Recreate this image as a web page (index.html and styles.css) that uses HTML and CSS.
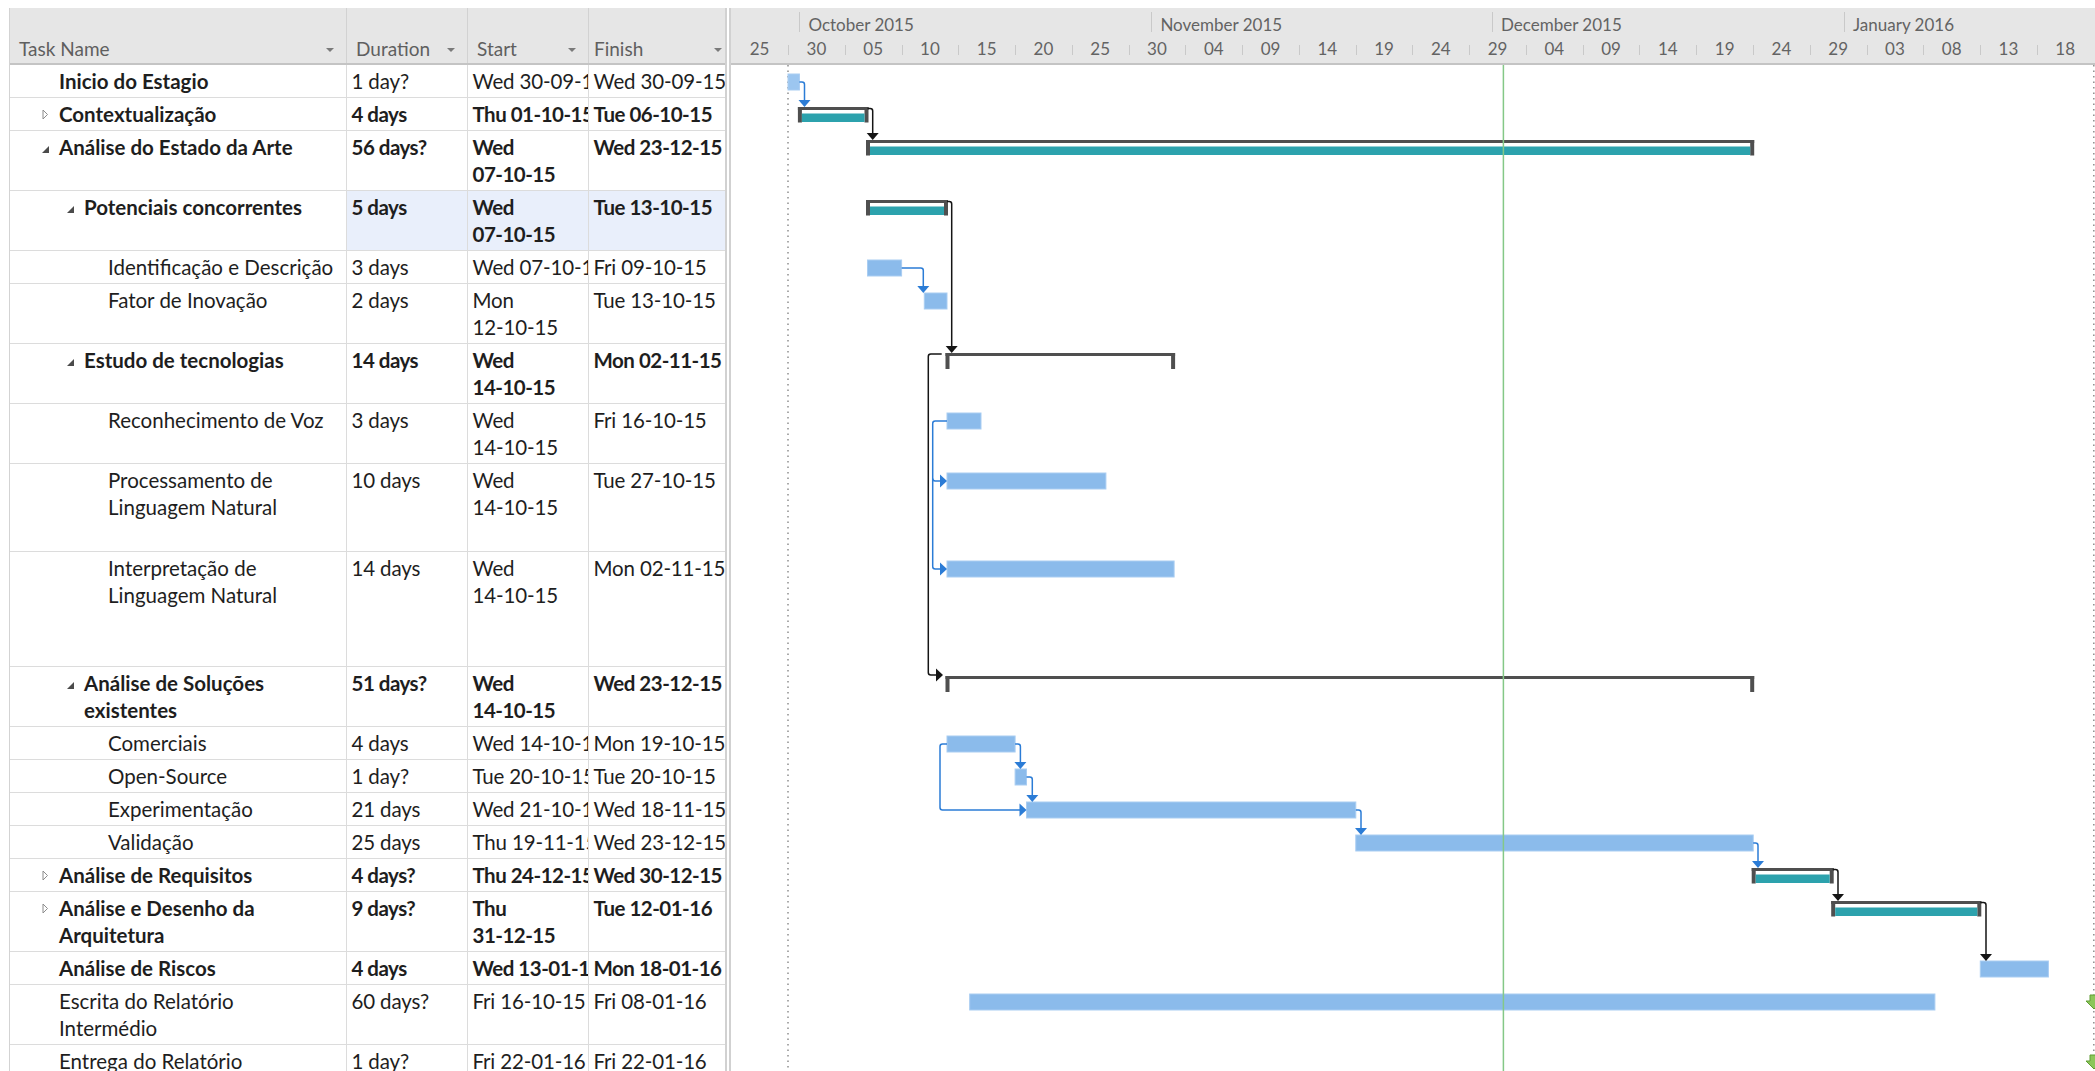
FILE: index.html
```html
<!DOCTYPE html>
<html lang="pt">
<head>
<meta charset="utf-8">
<title>Gantt Chart</title>
<link rel="stylesheet" href="styles.css">
</head>
<body>
<div class="app">
  <section class="sheet">
    <div class="sheet-head">
      <div class="hc c-name"><span>Task Name</span><i class="dd"></i></div>
      <div class="hc c-dur"><span>Duration</span><i class="dd"></i></div>
      <div class="hc c-start"><span>Start</span><i class="dd"></i></div>
      <div class="hc c-fin"><span>Finish</span><i class="dd"></i></div>
    </div>
    <div class="rows">
      <div class="row h1">
        <div class="cell c-name l0 b"><span class="tog"></span><span>Inicio do Estagio</span></div>
        <div class="cell c-dur">1 day?</div><div class="cell c-start">Wed 30-09-15</div><div class="cell c-fin">Wed 30-09-15</div>
      </div>
      <div class="row h1 b">
        <div class="cell c-name l0"><span class="tog"><svg class="ic-col" width="7" height="11" viewBox="0 0 7 11"><path d="M1 1 L5.5 5.5 L1 10 Z"/></svg></span><span>Contextualização</span></div>
        <div class="cell c-dur">4 days</div><div class="cell c-start">Thu 01-10-15</div><div class="cell c-fin">Tue 06-10-15</div>
      </div>
      <div class="row h2 b">
        <div class="cell c-name l0"><span class="tog"><svg class="ic-exp" width="7" height="7" viewBox="0 0 7 7"><path d="M7 0 V7 H0 Z"/></svg></span><span>Análise do Estado da Arte</span></div>
        <div class="cell c-dur">56 days?</div><div class="cell c-start">Wed<br>07-10-15</div><div class="cell c-fin">Wed 23-12-15</div>
      </div>
      <div class="row h2 b">
        <div class="cell c-name l1"><span class="tog"><svg class="ic-exp" width="7" height="7" viewBox="0 0 7 7"><path d="M7 0 V7 H0 Z"/></svg></span><span>Potenciais concorrentes</span></div>
        <div class="cell c-dur sel">5 days</div><div class="cell c-start sel">Wed<br>07-10-15</div><div class="cell c-fin sel">Tue 13-10-15</div>
      </div>
      <div class="row h1">
        <div class="cell c-name l2"><span>Identificação e Descrição</span></div>
        <div class="cell c-dur">3 days</div><div class="cell c-start">Wed 07-10-15</div><div class="cell c-fin">Fri 09-10-15</div>
      </div>
      <div class="row h2">
        <div class="cell c-name l2"><span>Fator de Inovação</span></div>
        <div class="cell c-dur">2 days</div><div class="cell c-start">Mon<br>12-10-15</div><div class="cell c-fin">Tue 13-10-15</div>
      </div>
      <div class="row h2 b">
        <div class="cell c-name l1"><span class="tog"><svg class="ic-exp" width="7" height="7" viewBox="0 0 7 7"><path d="M7 0 V7 H0 Z"/></svg></span><span>Estudo de tecnologias</span></div>
        <div class="cell c-dur">14 days</div><div class="cell c-start">Wed<br>14-10-15</div><div class="cell c-fin">Mon 02-11-15</div>
      </div>
      <div class="row h2">
        <div class="cell c-name l2"><span>Reconhecimento de Voz</span></div>
        <div class="cell c-dur">3 days</div><div class="cell c-start">Wed<br>14-10-15</div><div class="cell c-fin">Fri 16-10-15</div>
      </div>
      <div class="row h3">
        <div class="cell c-name l2"><span>Processamento de<br>Linguagem Natural</span></div>
        <div class="cell c-dur">10 days</div><div class="cell c-start">Wed<br>14-10-15</div><div class="cell c-fin">Tue 27-10-15</div>
      </div>
      <div class="row h4">
        <div class="cell c-name l2"><span>Interpretação de<br>Linguagem Natural</span></div>
        <div class="cell c-dur">14 days</div><div class="cell c-start">Wed<br>14-10-15</div><div class="cell c-fin">Mon 02-11-15</div>
      </div>
      <div class="row h2 b">
        <div class="cell c-name l1"><span class="tog"><svg class="ic-exp" width="7" height="7" viewBox="0 0 7 7"><path d="M7 0 V7 H0 Z"/></svg></span><span>Análise de Soluções<br>existentes</span></div>
        <div class="cell c-dur">51 days?</div><div class="cell c-start">Wed<br>14-10-15</div><div class="cell c-fin">Wed 23-12-15</div>
      </div>
      <div class="row h1">
        <div class="cell c-name l2"><span>Comerciais</span></div>
        <div class="cell c-dur">4 days</div><div class="cell c-start">Wed 14-10-15</div><div class="cell c-fin">Mon 19-10-15</div>
      </div>
      <div class="row h1">
        <div class="cell c-name l2"><span>Open-Source</span></div>
        <div class="cell c-dur">1 day?</div><div class="cell c-start">Tue 20-10-15</div><div class="cell c-fin">Tue 20-10-15</div>
      </div>
      <div class="row h1">
        <div class="cell c-name l2"><span>Experimentação</span></div>
        <div class="cell c-dur">21 days</div><div class="cell c-start">Wed 21-10-15</div><div class="cell c-fin">Wed 18-11-15</div>
      </div>
      <div class="row h1">
        <div class="cell c-name l2"><span>Validação</span></div>
        <div class="cell c-dur">25 days</div><div class="cell c-start">Thu 19-11-15</div><div class="cell c-fin">Wed 23-12-15</div>
      </div>
      <div class="row h1 b">
        <div class="cell c-name l0"><span class="tog"><svg class="ic-col" width="7" height="11" viewBox="0 0 7 11"><path d="M1 1 L5.5 5.5 L1 10 Z"/></svg></span><span>Análise de Requisitos</span></div>
        <div class="cell c-dur">4 days?</div><div class="cell c-start">Thu 24-12-15</div><div class="cell c-fin">Wed 30-12-15</div>
      </div>
      <div class="row h2 b">
        <div class="cell c-name l0"><span class="tog"><svg class="ic-col" width="7" height="11" viewBox="0 0 7 11"><path d="M1 1 L5.5 5.5 L1 10 Z"/></svg></span><span>Análise e Desenho da<br>Arquitetura</span></div>
        <div class="cell c-dur">9 days?</div><div class="cell c-start">Thu<br>31-12-15</div><div class="cell c-fin">Tue 12-01-16</div>
      </div>
      <div class="row h1 b">
        <div class="cell c-name l0"><span class="tog"></span><span>Análise de Riscos</span></div>
        <div class="cell c-dur">4 days</div><div class="cell c-start">Wed 13-01-16</div><div class="cell c-fin">Mon 18-01-16</div>
      </div>
      <div class="row h2">
        <div class="cell c-name l0"><span class="tog"></span><span>Escrita do Relatório<br>Intermédio</span></div>
        <div class="cell c-dur">60 days?</div><div class="cell c-start">Fri 16-10-15</div><div class="cell c-fin">Fri 08-01-16</div>
      </div>
      <div class="row h2">
        <div class="cell c-name l0"><span class="tog"></span><span>Entrega do Relatório<br>Intermédio</span></div>
        <div class="cell c-dur">1 day?</div><div class="cell c-start">Fri 22-01-16</div><div class="cell c-fin">Fri 22-01-16</div>
      </div>
    </div>
  </section>

  <div class="splitter"></div>

  <section class="gantt">
    <div class="scale">
      <div class="months">
        <div class="mon m-sep"></div>
        <div class="mon m-oct">October 2015</div>
        <div class="mon m-nov">November 2015</div>
        <div class="mon m-dec">December 2015</div>
        <div class="mon m-jan">January 2016</div>
      </div>
      <div class="days">
        <div class="day first">25</div><div class="day">30</div><div class="day">05</div><div class="day">10</div>
        <div class="day">15</div><div class="day">20</div><div class="day">25</div><div class="day">30</div>
        <div class="day">04</div><div class="day">09</div><div class="day">14</div><div class="day">19</div>
        <div class="day">24</div><div class="day">29</div><div class="day">04</div><div class="day">09</div>
        <div class="day">14</div><div class="day">19</div><div class="day">24</div><div class="day">29</div>
        <div class="day">03</div><div class="day">08</div><div class="day">13</div><div class="day">18</div>
      </div>
    </div>
    <div class="plot">
      <svg class="bars" width="1364" height="1006" viewBox="0 0 1364 1006">
        <!-- project start / finish markers -->
        <line class="proj" x1="57" y1="0" x2="57" y2="1006"/>
        <line class="proj" x1="1362.8" y1="0" x2="1362.8" y2="1006"/>

        <!-- summary bars: top rule, end caps, fill -->
        <g class="sum">
          <rect class="rule" x="66.9" y="42" width="70.6" height="3"/>
          <rect class="rule" x="66.9" y="42" width="4" height="15.5"/>
          <rect class="rule" x="133.5" y="42" width="4" height="15.5"/>
          <rect class="fill" x="70.9" y="48.5" width="62.6" height="8.5"/>

          <rect class="rule" x="135" y="75" width="888.2" height="3"/>
          <rect class="rule" x="135" y="75" width="4" height="15.5"/>
          <rect class="rule" x="1019.2" y="75" width="4" height="15.5"/>
          <rect class="fill" x="139" y="81.5" width="880.2" height="8.5"/>

          <rect class="rule" x="135" y="135" width="82" height="3"/>
          <rect class="rule" x="135" y="135" width="4" height="15.5"/>
          <rect class="rule" x="213" y="135" width="4" height="15.5"/>
          <rect class="fill" x="139" y="141.5" width="74" height="8.5"/>

          <rect class="rule" x="214.5" y="288" width="229.6" height="3"/>
          <rect class="rule" x="214.5" y="288" width="4" height="16"/>
          <rect class="rule" x="440.1" y="288" width="4" height="16"/>

          <rect class="rule" x="214.5" y="611" width="808.7" height="3"/>
          <rect class="rule" x="214.5" y="611" width="4" height="16"/>
          <rect class="rule" x="1019.2" y="611" width="4" height="16"/>

          <rect class="rule" x="1020.7" y="803" width="82" height="3"/>
          <rect class="rule" x="1020.7" y="803" width="4" height="15.5"/>
          <rect class="rule" x="1098.7" y="803" width="4" height="15.5"/>
          <rect class="fill" x="1024.7" y="809.5" width="74" height="8.5"/>

          <rect class="rule" x="1100.2" y="836" width="150.1" height="3"/>
          <rect class="rule" x="1100.2" y="836" width="4" height="15.5"/>
          <rect class="rule" x="1246.3" y="836" width="4" height="15.5"/>
          <rect class="fill" x="1104.2" y="842.5" width="142.1" height="8.5"/>
        </g>

        <!-- task bars -->
        <rect class="task est" x="57" y="9" width="11.4" height="16"/>
        <rect class="task" x="136.5" y="195" width="34.1" height="16"/>
        <rect class="task" x="193.3" y="228" width="22.7" height="16"/>
        <rect class="task" x="216" y="348" width="34" height="16"/>
        <rect class="task" x="216" y="408" width="158.9" height="16"/>
        <rect class="task" x="216" y="496" width="227.1" height="16"/>
        <rect class="task" x="216" y="671" width="68.1" height="16"/>
        <rect class="task" x="284.1" y="704" width="11.4" height="16"/>
        <rect class="task" x="295.5" y="737" width="329.3" height="16"/>
        <rect class="task" x="624.8" y="770" width="397.4" height="16"/>
        <rect class="task" x="1249.3" y="896" width="68.1" height="16"/>
        <rect class="task" x="238.7" y="929" width="965.2" height="16"/>

        <!-- task dependency links -->
        <g class="lnk">
          <path d="M68.4 17 H71 Q73.5 17 73.5 19.5 V35.5"/>
          <path d="M170.6 203 H189.8 Q192.3 203 192.3 205.5 V221.5"/>
          <path d="M216 356 H204.2 Q201.7 356 201.7 358.5 V501.5 Q201.7 504 204.2 504 H209.5"/>
          <path d="M201.7 413.5 Q201.7 416 204.2 416 H209.5"/>
          <path d="M284.1 679 H286.9 Q289.4 679 289.4 681.5 V697.5"/>
          <path d="M295.5 712 H298.8 Q301.3 712 301.3 714.5 V730.5"/>
          <path d="M216 679 H211.5 Q209 679 209 681.5 V742.5 Q209 745 211.5 745 H289"/>
          <path d="M624.8 745 H627.5 Q630 745 630 747.5 V763.5"/>
          <path d="M1022.2 778 H1024.5 Q1027 778 1027 780.5 V796.5"/>
        </g>
        <g class="arw">
          <polygon points="67.5,35 79.5,35 73.5,42"/>
          <polygon points="186.3,221 198.3,221 192.3,228"/>
          <polygon points="209,409.5 209,422.5 216,416"/>
          <polygon points="209,497.5 209,510.5 216,504"/>
          <polygon points="283.4,697 295.4,697 289.4,704"/>
          <polygon points="295.3,730 307.3,730 301.3,737"/>
          <polygon points="288.5,738.5 288.5,751.5 295.5,745"/>
          <polygon points="624,763 636,763 630,770"/>
          <polygon points="1021,796 1033,796 1027,803"/>
        </g>

        <g class="lnk dark">
          <path d="M136.5 43.5 H139.2 Q141.7 43.5 141.7 46 V68.5"/>
          <path d="M216 136.5 H218.2 Q220.7 136.5 220.7 139 V281.5"/>
          <path d="M210.7 289 H199.8 Q197.3 289 197.3 291.5 V607.5 Q197.3 610 199.8 610 H205.5"/>
          <path d="M1101.7 804.5 H1104.5 Q1107 804.5 1107 807 V829.5"/>
          <path d="M1249.3 837.5 H1252.5 Q1255 837.5 1255 840 V889.5"/>
        </g>
        <g class="arw dark">
          <polygon points="135.7,68 147.7,68 141.7,75"/>
          <polygon points="214.7,281 226.7,281 220.7,288"/>
          <polygon points="205,603.5 205,616.5 212,610"/>
          <polygon points="1101,829 1113,829 1107,836"/>
          <polygon points="1249,889 1261,889 1255,896"/>
        </g>

        <!-- status date -->
        <line class="today" x1="772.4" y1="0" x2="772.4" y2="1006"/>

        <!-- deadline markers -->
        <g class="deadline">
          <polygon points="1359,930 1367,930 1367,936 1371,936 1363,944 1355,936 1359,936"/>
          <polygon points="1359,990 1367,990 1367,996 1371,996 1363,1004 1355,996 1359,996"/>
        </g>
      </svg>
    </div>
  </section>
</div>
</body>
</html>
```

FILE: styles.css
```css
* {
  box-sizing: border-box;
}

html,
body {
  margin: 0;
  padding: 0;
  background: #ffffff;
}

body {
  width: 2095px;
  height: 1071px;
  overflow: hidden;
  font-family: Lato, "Liberation Sans", sans-serif;
  color: #1e1e1e;
}

.app {
  display: flex;
  height: 1071px;
  padding-top: 8px;
}

/* ---------- task sheet ---------- */

.sheet {
  flex: none;
  width: 716px;
  margin-left: 9px;
  border-left: 1px solid #d3d3d3;
  overflow: hidden;
}

.sheet-head {
  display: flex;
  height: 57px;
  background: #e6e6e6;
  border-bottom: 2px solid #c4c4c4;
}

.hc {
  flex: none;
  display: flex;
  align-items: flex-end;
  justify-content: space-between;
  padding: 0 12px 2px 9px;
  border-right: 1px solid #d2d2d2;
  font-size: 19px;
  line-height: 24px;
  color: #5f5f5f;
  white-space: nowrap;
}

.hc.c-fin {
  padding-left: 5px;
}

.dd {
  width: 0;
  height: 0;
  margin-bottom: 9px;
  border-left: 4px solid transparent;
  border-right: 4px solid transparent;
  border-top: 4px solid #7a7a7a;
}

.c-name {
  width: 337px;
}

.c-dur,
.c-start {
  width: 121px;
}

.c-fin {
  width: 146px;
}

.row {
  display: flex;
  border-bottom: 1px solid #dcdcdc;
}

.h1 { height: 33px; }
.h2 { height: 60px; }
.h3 { height: 88px; }
.h4 { height: 115px; }

.b {
  font-weight: 700;
}

.cell {
  flex: none;
  padding: 3px 0 0 4.5px;
  border-right: 1px solid #dcdcdc;
  font-size: 20.5px;
  line-height: 27px;
  white-space: nowrap;
  overflow: hidden;
}

/* dates and durations sit a touch tighter than names */
.cell.c-dur,
.cell.c-start,
.cell.c-fin {
  letter-spacing: -0.15px;
}

.b .cell.c-dur,
.b .cell.c-start,
.b .cell.c-fin {
  letter-spacing: -0.5px;
}

.cell.c-name {
  display: flex;
  align-items: flex-start;
}

.l0 { padding-left: 32px; }
.l1 { padding-left: 57px; }
.l2 { padding-left: 98px; }

.tog {
  flex: none;
  width: 17px;
  height: 27px;
  display: flex;
  align-items: center;
}

.ic-col path {
  fill: none;
  stroke: #8c8c8c;
  stroke-width: 1;
}

.ic-exp {
  margin-top: 4px;
}

.ic-exp path {
  fill: #4b4b4b;
}

.sel {
  background: #e9effb;
}

/* ---------- pane splitter ---------- */

.splitter {
  flex: none;
  width: 6px;
  border-left: 2px solid #d1d1d1;
  border-right: 2px solid #d1d1d1;
  background: #ffffff;
}

/* ---------- timescale ---------- */

.gantt {
  flex: 1;
  min-width: 0;
  overflow: hidden;
}

.scale {
  height: 57px;
  background: #e6e6e6;
  border-bottom: 2px solid #c4c4c4;
}

.months {
  display: flex;
  height: 29px;
}

.mon {
  position: relative;
  flex: none;
  padding: 5px 0 0 9px;
  font-size: 17px;
  line-height: 24px;
  color: #636363;
  white-space: nowrap;
}

.mon + .mon::before {
  content: "";
  position: absolute;
  left: 0;
  top: 4px;
  height: 20px;
  border-left: 1px solid #c9c9c9;
}

.m-sep { width: 68.4px; }
.m-oct { width: 352px; }
.m-nov { width: 340.6px; }
.m-dec { width: 352px; }
.m-jan { width: 251px; }

.days {
  display: flex;
  height: 26px;
}

.day {
  position: relative;
  flex: none;
  width: 56.775px;
  text-align: center;
  font-size: 17px;
  line-height: 24px;
  color: #636363;
}

.day.first {
  width: 57px;
}

.day + .day::before {
  content: "";
  position: absolute;
  left: 0;
  top: 8px;
  height: 10px;
  border-left: 1px solid #c9c9c9;
}

/* ---------- bar chart ---------- */

.plot {
  height: 1006px;
}

.bars {
  display: block;
}

.proj {
  stroke: #8e8e8e;
  stroke-width: 1.5;
  stroke-dasharray: 1.5 4;
}

.today {
  stroke: #84c887;
  stroke-width: 1.5;
}

.sum .rule {
  fill: #4f4f4f;
}

.sum .fill {
  fill: #2ca2ad;
}

.task {
  fill: #8bbbeb;
  stroke: #a9cdf2;
  stroke-width: 1;
}

.task.est {
  fill: #9cc6f0;
}

.lnk path {
  fill: none;
  stroke: #2b7cd6;
  stroke-width: 1.5;
}

.lnk.dark path {
  stroke: #151515;
}

.arw polygon {
  fill: #2b7cd6;
}

.arw.dark polygon {
  fill: #151515;
}

.deadline polygon {
  fill: #8cc65a;
  stroke: #5e9d33;
  stroke-width: 1;
}
```
